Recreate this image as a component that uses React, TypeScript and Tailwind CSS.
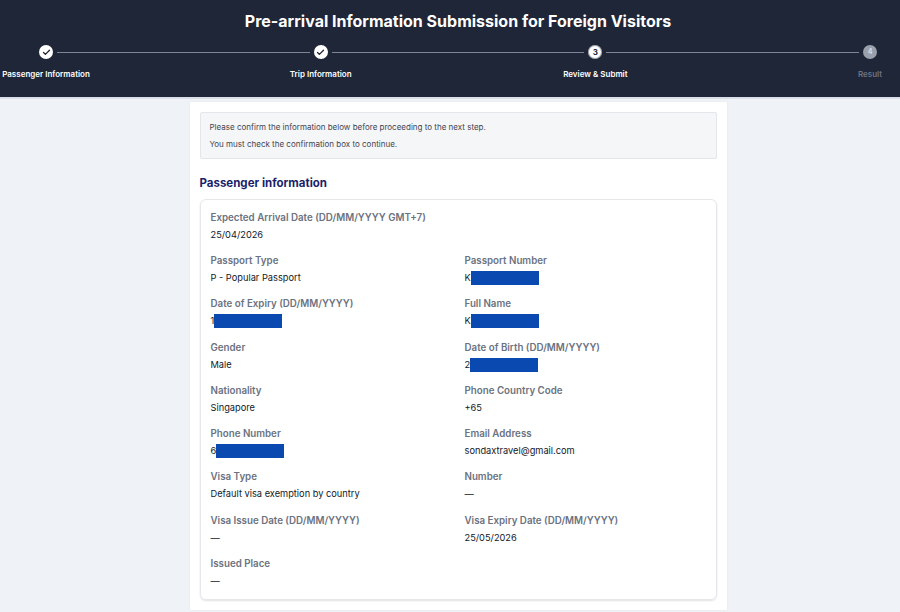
import React from 'react';
import { Check } from 'lucide-react';

type Step = { label: string; state: 'done' | 'current' | 'todo'; num: number };

const steps: Step[] = [
  { label: 'Passenger Information', state: 'done', num: 1 },
  { label: 'Trip Information', state: 'done', num: 2 },
  { label: 'Review & Submit', state: 'current', num: 3 },
  { label: 'Result', state: 'todo', num: 4 },
];

type Field = { label: string; value: React.ReactNode };

// value with the tail hidden behind a blue block
function Masked({ first }: { first: string }) {
  return (
    <span className="inline-flex items-center">
      {first}
      <span className="inline-block h-[14px] w-[68px] bg-[#0a49b0]" />
    </span>
  );
}

const fields: Field[] = [
  { label: 'Passport Type', value: 'P - Popular Passport' },
  { label: 'Passport Number', value: <Masked first="K" /> },
  { label: 'Date of Expiry (DD/MM/YYYY)', value: <Masked first="1" /> },
  { label: 'Full Name', value: <Masked first="K" /> },
  { label: 'Gender', value: 'Male' },
  { label: 'Date of Birth (DD/MM/YYYY)', value: <Masked first="2" /> },
  { label: 'Nationality', value: 'Singapore' },
  { label: 'Phone Country Code', value: '+65' },
  { label: 'Phone Number', value: <Masked first="6" /> },
  { label: 'Email Address', value: 'sondaxtravel@gmail.com' },
  { label: 'Visa Type', value: 'Default visa exemption by country' },
  { label: 'Number', value: '—' },
  { label: 'Visa Issue Date (DD/MM/YYYY)', value: '—' },
  { label: 'Visa Expiry Date (DD/MM/YYYY)', value: '25/05/2026' },
  { label: 'Issued Place', value: '—' },
];

function StepDot({ step }: { step: Step }) {
  if (step.state === 'done') {
    return (
      <div className="flex h-[14px] w-[14px] items-center justify-center rounded-full bg-white">
        <Check size={9} strokeWidth={3.5} className="text-[#1e2637]" />
      </div>
    );
  }
  if (step.state === 'current') {
    return (
      <div className="flex h-[14px] w-[14px] items-center justify-center rounded-full bg-white ring-1 ring-inset ring-[#1e2637]/40 text-[8px] font-bold text-[#1e2637]">
        {step.num}
      </div>
    );
  }
  return (
    <div className="flex h-[14px] w-[14px] items-center justify-center rounded-full bg-[#9aa1ad] text-[7px] font-bold text-[#d7dbe1]">
      {step.num}
    </div>
  );
}

function InfoField({ field }: { field: Field }) {
  return (
    <div className="flex flex-col">
      <div className="text-[9.75px] font-semibold leading-[14px] text-[#6b7280]">{field.label}</div>
      <div className="mt-[3px] text-[9.25px] leading-[14px] text-[#111827]">{field.value}</div>
    </div>
  );
}

export default function App() {
  return (
    <div className="min-h-[612px] bg-[#eff2f7]" style={{ fontFamily: 'Inter, "Noto Sans", sans-serif' }}>
      <header className="h-[99px] border-b-2 border-[#d9dee7] bg-[#1e2637] pt-[10px]">
        <h1 className="text-center text-[16px] font-bold leading-[22px] text-white">
          <span className="ml-[16px]">Pre-arrival Information Submission for Foreign Visitors</span>
        </h1>
        <div className="mt-[13px] ml-[39px] mr-[23px] flex">
          {steps.map((s, i) => (
            <React.Fragment key={s.label}>
              {i > 0 && <div className="mx-[4px] mt-[7px] h-px flex-1 bg-[#7d8696]" />}
              <div className="flex w-[14px] flex-col items-center">
                <StepDot step={s} />
                <div
                  className={`mt-[9px] whitespace-nowrap text-[8px] font-semibold leading-[12px] ${
                    s.state === 'todo' ? 'text-[#6b7384]' : 'text-white'
                  }`}
                >
                  {s.label}
                </div>
              </div>
            </React.Fragment>
          ))}
        </div>
      </header>

      <main className="flex justify-center pt-[3px] pl-[16px]">
        <div className="w-[537px] bg-white p-[10px] shadow-[0_0_2px_rgba(0,0,0,0.06)]">
          <div className="rounded-[2px] border border-[#e3e6ea] bg-[#f5f6f8] px-[9px] py-[5.5px] text-[8px] leading-[17px] text-[#3f4550]">
            <p>Please confirm the information below before proceeding to the next step.</p>
            <p>You must check the confirmation box to continue.</p>
          </div>

          <h2 className="mt-[15px] text-[11.5px] font-bold leading-[18px] text-[#1b1f6b]">Passenger information</h2>

          <div className="mt-[7px] rounded-md border border-[#e5e7eb] px-[10px] pt-[11px] pb-[11px] shadow-[0_1px_2px_rgba(0,0,0,0.12)]">
            <InfoField field={{ label: 'Expected Arrival Date (DD/MM/YYYY GMT+7)', value: '25/04/2026' }} />
            <div className="mt-[12px] grid grid-cols-[254px_1fr] gap-y-[12.3px]">
              {fields.map((f) => (
                <InfoField key={f.label} field={f} />
              ))}
            </div>
          </div>
        </div>
      </main>
    </div>
  );
}
